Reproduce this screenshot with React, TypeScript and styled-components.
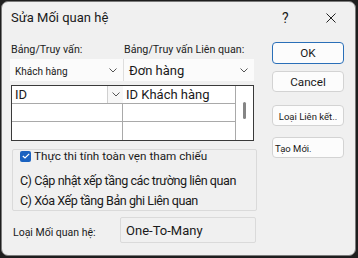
import React from "react";
import styled, { createGlobalStyle } from "styled-components";

const GlobalStyle = createGlobalStyle`
  html, body {
    margin: 0;
    padding: 0;
    background: #1e1e1e;
  }
  body {
    font-family: Roboto, "Noto Sans", sans-serif;
    color: #1a1a1a;
    white-space: nowrap;
  }
`;

const Dialog = styled.div`
  margin: 1px 2px 2px 1px;
  width: 355px;
  height: 255px;
  box-sizing: border-box;
  background: #f0f0f0;
  border: 1px solid #7a7a7a;
  border-radius: 7px;
  display: flex;
  flex-direction: column;
  overflow: hidden;
`;

const TitleBar = styled.div`
  height: 31px;
  display: flex;
  align-items: center;
  padding-left: 9px;
  font-size: 13px;
`;

const Title = styled.div`
  flex: 1;
`;

const HelpMark = styled.div`
  width: 12px;
  font-size: 14px;
  margin-right: 32px;
`;

const CloseIcon = styled.svg`
  width: 10px;
  height: 10px;
  margin-right: 19px;
`;

const Body = styled.div`
  display: flex;
  flex: 1;
`;

const LeftPane = styled.div`
  width: 245px;
  padding-left: 9px;
  display: flex;
  flex-direction: column;
`;

const LabelRow = styled.div`
  margin-top: 10px;
  display: grid;
  grid-template-columns: 113px 1fr;
  font-size: 10.7px;
  line-height: 14px;
  color: #222;
`;

const ComboRow = styled.div`
  margin-top: 2px;
  margin-left: -1px;
  width: 244px;
  height: 22px;
  display: grid;
  grid-template-columns: 113px 1fr;
  background: #fbfbfb;
`;

const Combo = styled.div<{ $divider?: boolean }>`
  display: flex;
  align-items: center;
  padding: 0 6px 0 5px;
  border-left: ${(p) => (p.$divider ? "1px solid #dedede" : "none")};
`;

const ComboText = styled.span<{ $small?: boolean }>`
  flex: 1;
  font-size: ${(p) => (p.$small ? "10px" : "13px")};
  padding-top: ${(p) => (p.$small ? "3px" : "0")};
`;

const Chevron = () => (
  <svg width="8" height="5" viewBox="0 0 8 5">
    <path d="M0.5 0.5 L4 4 L7.5 0.5" fill="none" stroke="#555" strokeWidth="1" />
  </svg>
);

const Grid = styled.div`
  margin-top: 4px;
  width: 243px;
  box-sizing: border-box;
  border: 1px solid #3a3a3a;
  background: #fff;
  display: grid;
  grid-template-columns: 111px 113px 1fr;
  grid-template-rows: 18px 18px 18px;
`;

const Cell = styled.div<{ $col: number; $row: number }>`
  display: flex;
  align-items: center;
  font-size: 13px;
  padding-left: 3px;
  box-sizing: border-box;
  border-right: ${(p) => (p.$col < 2 ? "1px solid #a9a9a9" : "none")};
  border-bottom: ${(p) => (p.$row < 2 ? "1px solid #a9a9a9" : "none")};
`;

const CellText = styled.span`
  flex: 1;
`;

const CellButton = styled.div`
  width: 15px;
  height: 17px;
  margin-right: -1px;
  display: flex;
  align-items: center;
  justify-content: center;
  background: #f7f7f7;
  border-left: 1px solid #d0d0d0;
`;

const ScrollColumn = styled.div`
  grid-column: 3;
  grid-row: 1 / span 3;
  display: flex;
  justify-content: center;
  padding-top: 16px;
`;

const ScrollThumb = styled.div`
  width: 3px;
  height: 17px;
  border-radius: 2px;
  background: #858585;
`;

const GroupBox = styled.div`
  margin-top: 8px;
  margin-left: 1px;
  width: 245px;
  height: 62px;
  box-sizing: border-box;
  border: 1px solid #dadada;
  border-radius: 2px;
  padding: 0 0 0 7px;
  display: flex;
  flex-direction: column;
`;

const CheckRow = styled.div`
  display: flex;
  align-items: center;
  height: 12px;
  font-size: 11.7px;
  gap: 3px;
`;

const CheckBox = styled.div`
  width: 11px;
  height: 11px;
  border-radius: 2px;
  background: #1a62c0;
  display: flex;
  align-items: center;
  justify-content: center;
`;

const Option = styled.div<{ $gap: number }>`
  margin-top: ${(p) => p.$gap}px;
  font-size: 12.6px;
  letter-spacing: -0.45px;
  line-height: 16px;
  color: #1a1a1a;
`;

const TypeRow = styled.div`
  margin-top: 6px;
  display: flex;
  align-items: center;
  height: 26px;
`;

const TypeLabel = styled.div`
  width: 108px;
  padding-left: 2px;
  font-size: 10.5px;
  padding-top: 4px;
`;

const TypeValue = styled.div`
  width: 137px;
  height: 26px;
  box-sizing: border-box;
  border: 1px solid #dadada;
  border-radius: 2px;
  padding-left: 5px;
  display: flex;
  align-items: center;
  font-size: 13px;
`;

const RightPane = styled.div`
  margin-left: 16px;
  padding-top: 9px;
  display: flex;
  flex-direction: column;
`;

const Button = styled.div<{ $primary?: boolean; $gap: number; $h: number; $small?: boolean; $left?: boolean }>`
  margin-top: ${(p) => p.$gap}px;
  width: 72px;
  height: ${(p) => p.$h}px;
  box-sizing: border-box;
  border: 1px solid ${(p) => (p.$primary ? "#2a6fb8" : "#d3d3d3")};
  border-radius: 4px;
  background: #fcfcfc;
  display: flex;
  align-items: center;
  justify-content: ${(p) => (p.$left ? "flex-start" : "center")};
  padding-left: ${(p) => (p.$left ? "2px" : "0")};
  padding-top: ${(p) => (p.$small ? "2px" : "0")};
  font-size: ${(p) => (p.$small ? "9.5px" : "11.7px")};
`;

export default function App() {
  const rows = [0, 1, 2];
  return (
    <>
      <GlobalStyle />
      <Dialog>
        <TitleBar>
          <Title>Sửa Mối quan hệ</Title>
          <HelpMark>?</HelpMark>
          <CloseIcon viewBox="0 0 10 10">
            <path d="M0.5 0.5 L9.5 9.5 M9.5 0.5 L0.5 9.5" stroke="#222" strokeWidth="1" />
          </CloseIcon>
        </TitleBar>
        <Body>
          <LeftPane>
            <LabelRow>
              <span>Bảng/Truy vấn:</span>
              <span>Bảng/Truy vấn Liên quan:</span>
            </LabelRow>
            <ComboRow>
              <Combo>
                <ComboText $small>Khách hàng</ComboText>
                <Chevron />
              </Combo>
              <Combo $divider>
                <ComboText>Đơn hàng</ComboText>
                <Chevron />
              </Combo>
            </ComboRow>
            <Grid>
              {rows.map((r) => (
                <React.Fragment key={r}>
                  <Cell $col={0} $row={r} style={{ gridColumn: 1, gridRow: r + 1 }}>
                    {r === 0 && (
                      <>
                        <CellText>ID</CellText>
                        <CellButton>
                          <Chevron />
                        </CellButton>
                      </>
                    )}
                  </Cell>
                  <Cell $col={1} $row={r} style={{ gridColumn: 2, gridRow: r + 1 }}>
                    {r === 0 && <CellText>ID Khách hàng</CellText>}
                  </Cell>
                </React.Fragment>
              ))}
              <ScrollColumn>
                <ScrollThumb />
              </ScrollColumn>
            </Grid>
            <GroupBox>
              <CheckRow>
                <CheckBox>
                  <svg width="8" height="6" viewBox="0 0 8 6">
                    <path d="M0.8 3 L3 5 L7.2 0.8" fill="none" stroke="#fff" strokeWidth="1.2" />
                  </svg>
                </CheckBox>
                <span>Thực thi tính toàn vẹn tham chiếu</span>
              </CheckRow>
              <Option $gap={11}>C) Cập nhật xếp tầng các trường liên quan</Option>
              <Option $gap={4}>C) Xóa Xếp tầng Bản ghi Liên quan</Option>
            </GroupBox>
            <TypeRow>
              <TypeLabel>Loại Mối quan hệ:</TypeLabel>
              <TypeValue>One-To-Many</TypeValue>
            </TypeRow>
          </LeftPane>
          <RightPane>
            <Button $primary $gap={0} $h={22}>OK</Button>
            <Button $gap={7} $h={21}>Cancel</Button>
            <Button $gap={13} $h={21} $small>Loại Liên kết..</Button>
            <Button $gap={11} $h={21} $small $left>Tạo Mới.</Button>
          </RightPane>
        </Body>
      </Dialog>
    </>
  );
}
